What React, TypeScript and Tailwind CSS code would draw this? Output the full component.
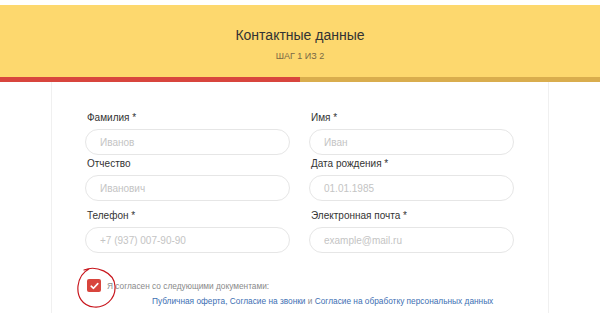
import type { ReactNode } from 'react'

function Field({ label, placeholder, className = '' }: { label: string; placeholder: string; className?: string }) {
  return (
    <div className={className}>
      <div className="pl-[2px] text-[10px] leading-[12px] text-[#333]">{label}</div>
      <div className="mt-[5px] flex h-[26px] w-[205px] items-center rounded-full border border-[#e6e6e6] bg-white pl-[14px] text-[10px] text-[#c4c4c4]">
        {placeholder}
      </div>
    </div>
  )
}

function Link({ children }: { children: ReactNode }) {
  return <span className="text-[#3d6fb3]">{children}</span>
}

export default function App() {
  return (
    <div className="relative h-[313px] w-[600px] overflow-hidden bg-white pt-[5px] font-['Liberation_Sans',Arial,sans-serif]">
      <div className="flex h-[72px] flex-col items-center bg-[#fdd86e] pt-[22px]">
        <div className="text-[14px] leading-[17px] text-[#333]">Контактные данные</div>
        <div className="mt-[7px] text-[9px] leading-[10px] text-[#7a6a45]">ШАГ 1 ИЗ 2</div>
      </div>
      <div className="flex h-[5px]">
        <div className="w-1/2 bg-[#d8453d]" />
        <div className="w-1/2 bg-[#d9ad4d]" />
      </div>

      <div className="mx-[51px] h-full border-x border-[#f0f0f0] pl-[33px] pt-[30px]">
        <div className="grid grid-cols-[205px_205px] gap-x-[19px]">
          <Field label="Фамилия *" placeholder="Иванов" />
          <Field label="Имя *" placeholder="Иван" />
          <Field label="Отчество" placeholder="Иванович" className="mt-[3px]" />
          <Field label="Дата рождения *" placeholder="01.01.1985" className="mt-[3px]" />
          <Field label="Телефон *" placeholder="+7 (937) 007-90-90" className="mt-[9px]" />
          <Field label="Электронная почта *" placeholder="example@mail.ru" className="mt-[9px]" />
        </div>

        <div className="mt-[26px] flex items-center pl-[2px]">
          <div className="flex h-[13px] w-[14px] items-center justify-center rounded-[2px] bg-[#d8453d]">
            <svg width="9" height="8" viewBox="0 0 9 8" fill="none">
              <polyline points="1.2,4.2 3.5,6.3 7.8,1.6" stroke="white" strokeWidth="1.6" strokeLinecap="round" strokeLinejoin="round" />
            </svg>
          </div>
          <span className="ml-[6px] text-[8.3px] leading-[10px] text-[#8a8a8a]">Я согласен со следующими документами:</span>
        </div>
        <div className="mt-[4px] pl-[67px] text-[8.3px] leading-[10px] text-[#8a8a8a]">
          <Link>Публичная оферта, Согласие на звонки</Link> и <Link>Согласие на обработку персональных данных</Link>
        </div>
      </div>

      <svg className="absolute left-[74px] top-[266px]" width="44" height="44" viewBox="0 0 44 44" fill="none">
        <path
          d="M10 4 C 22 -1, 40 6, 41 20 C 42 34, 30 42, 20 41 C 8 40, 3 30, 4 20 C 5 12, 9 6, 15 3"
          stroke="#c8161d"
          strokeWidth="1.2"
          strokeLinecap="round"
        />
      </svg>
    </div>
  )
}
